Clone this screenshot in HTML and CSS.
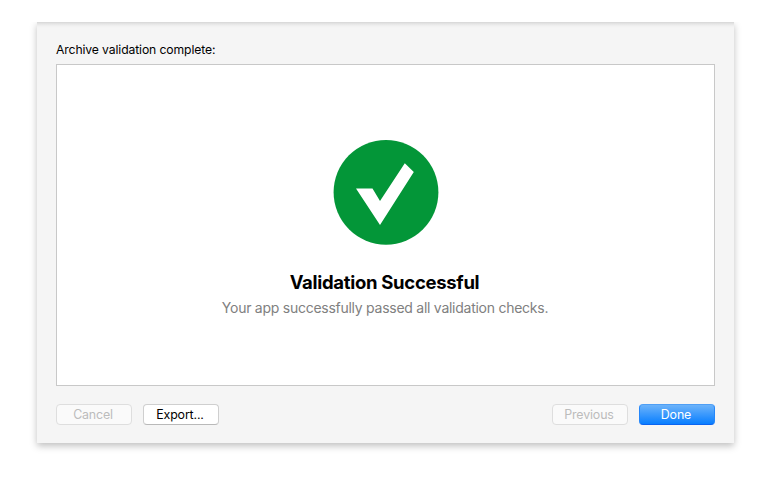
FILE: index.html
```html
<!DOCTYPE html>
<html lang="en">
<head>
<meta charset="utf-8">
<title>Archive validation</title>
<link rel="stylesheet" href="styles.css">
</head>
<body>
<main class="sheet">
  <p class="label">Archive validation complete:</p>
  <section class="panel">
    <svg class="badge" viewBox="0 0 106 106" aria-hidden="true">
      <circle cx="53" cy="53.3" r="52.4" fill="#039638"/>
      <path d="M23 49.500H39.500L47 62L71.800 24.200L80.800 33L47 86Z" fill="#fff"/>
    </svg>
    <h1 class="title">Validation Successful</h1>
    <p class="message">Your app successfully passed all validation checks.</p>
  </section>
  <footer class="actions">
    <button class="button" disabled>Cancel</button>
    <button class="button">Export...</button>
    <span class="spacer"></span>
    <button class="button" disabled>Previous</button>
    <button class="button primary">Done</button>
  </footer>
</main>
</body>
</html>
```
FILE: styles.css
```css
* { box-sizing: border-box; }
body {
  margin: 0;
  height: 485px;
  padding: 22px 34px 0 37px;
  background: #fff;
  font-family: Inter, "Liberation Sans", sans-serif;
}
.sheet {
  height: 421px;
  padding: 20px 19px 0;
  background: linear-gradient(#d6d6d6, #e6e6e6 2px, #f1f1f1 4px, #f5f5f5 6px);
  box-shadow: 0 3px 7px rgba(0, 0, 0, .25);
  clip-path: inset(0 -12px -16px -12px);
}
.label {
  margin: 0 0 6px;
  font-size: 12.2px;
  line-height: 16px;
  letter-spacing: -.12px;
  color: #000;
}
.panel {
  display: flex;
  flex-direction: column;
  align-items: center;
  height: 322px;
  padding-top: 74px;
  background: #fff;
  border: 1px solid #c8c8c8;
}
.badge { width: 106px; height: 106px; flex: none; }
.title {
  margin: 25px 2px 0 0;
  font-size: 18.5px;
  line-height: 24px;
  font-weight: 700;
  letter-spacing: -.3px;
}
.message {
  margin: 4px 1px 0 0;
  font-size: 14px;
  line-height: 20px;
  letter-spacing: -.26px;
  color: #808080;
}
.actions {
  display: flex;
  gap: 11px;
  margin-top: 18px;
}
.spacer { flex: 1; }
.button {
  width: 76px;
  height: 21px;
  padding: 0 2px 0 0;
  border: 1px solid #cfcfcf;
  border-bottom-color: #b9b9b9;
  border-radius: 4px;
  background: #fff;
  font: 12.4px/17px Inter, sans-serif;
  letter-spacing: -.15px;
  color: #000;
}
.button:disabled { background: #fafafa; border-color: #dedede; color: #bcbcbc; }
.button.primary {
  border-color: #4f9ff5 #2587fa #0a63f0;
  background: linear-gradient(#6cb3fa, #087eff);
  color: #fff;
}
```
